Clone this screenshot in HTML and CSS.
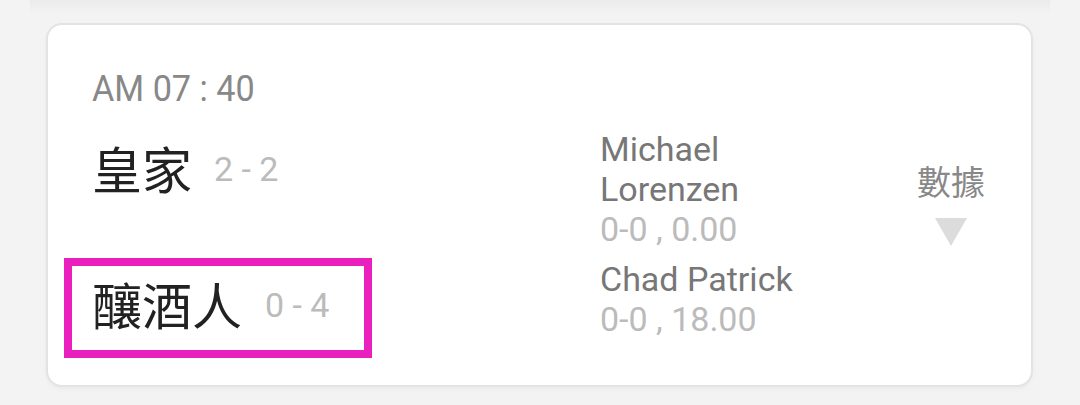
FILE: index.html
```html
<!DOCTYPE html>
<html lang="zh-Hant">

<head>
    <meta charset="UTF-8">
    <meta name="viewport" content="width=device-width, initial-scale=1.0">
    <title>賽程</title>
    <link rel="stylesheet" href="styles.css">
</head>

<body>
    <div class="prev-card"></div>

    <div class="game-card">
        <div class="game-time"><span>AM 07 : 40</span></div>

        <div class="game-body">
            <div class="teams">
                <div class="team">
                    <span class="team-name">皇家</span>
                    <span class="team-record">2 - 2</span>
                </div>
                <div class="team marked">
                    <span class="team-name">釀酒人</span>
                    <span class="team-record">0 - 4</span>
                </div>
            </div>

            <div class="pitchers">
                <div class="pitcher">
                    <div class="pitcher-name">Michael Lorenzen</div>
                    <div class="pitcher-stats">0-0 , 0.00</div>
                </div>
                <div class="pitcher">
                    <div class="pitcher-name">Chad Patrick</div>
                    <div class="pitcher-stats">0-0 , 18.00</div>
                </div>
            </div>

            <div class="stats-toggle">
                <span class="label">數據</span>
                <span class="arrow"></span>
            </div>
        </div>
    </div>
</body>

</html>
```

FILE: styles.css
```css
* {
    margin: 0;
    padding: 0;
    box-sizing: border-box;
}

body {
    font-family: Roboto, "Noto Sans CJK TC", sans-serif;
    background-color: #f3f3f3;
    width: 1080px;
    height: 405px;
    overflow: hidden;
}

.prev-card {
    height: 14px;
    margin: 0 30px;
    background: linear-gradient(#ebebeb, #f3f3f3);
}

.game-card {
    margin: 9px 47px 0 46px;
    height: 364px;
    background-color: #fff;
    border: 2px solid #e3e3e3;
    border-radius: 16px;
    box-shadow: 0 2px 4px rgba(0, 0, 0, 0.04);
    padding: 43px 45px 0 44px;
}

.game-time {
    height: 42px;
    line-height: 42px;
}

.game-time span {
    display: inline-block;
    font-size: 36px;
    color: #888;
    transform: scaleX(0.95);
    transform-origin: left center;
}

.game-body {
    display: flex;
    margin-top: 20px;
}

.teams {
    width: 508px;
    display: flex;
    flex-direction: column;
    gap: 52px;
}

.team {
    display: flex;
    align-items: center;
    height: 84px;
}

.team-name {
    font-family: "Noto Sans CJK TC", sans-serif;
    font-size: 50px;
    color: #222;
    margin-bottom: 10px;
}

.team-record {
    font-size: 34px;
    color: #bbb;
    margin-left: 22px;
    margin-bottom: 6px;
}

.team.marked {
    width: 292px;
    margin-left: -20px;
    padding-left: 20px;
    outline: 8px solid #e91fbe;
}

.team.marked .team-record {
    margin-left: 23px;
}

.pitchers {
    width: 230px;
    display: flex;
    flex-direction: column;
    gap: 10px;
    margin-top: -1px;
}

.pitcher {
    font-size: 34px;
    line-height: 40px;
}

.pitcher-name {
    color: #777;
}

.pitcher-stats {
    color: #bbb;
}

.stats-toggle {
    margin-left: auto;
    width: 70px;
    display: flex;
    flex-direction: column;
    align-items: center;
    margin-top: 31px;
}

.stats-toggle .label {
    font-family: "Noto Sans CJK TC", sans-serif;
    font-size: 34px;
    line-height: 40px;
    color: #888;
}

.stats-toggle .arrow {
    width: 0;
    height: 0;
    margin-top: 17px;
    border-left: 16px solid transparent;
    border-right: 16px solid transparent;
    border-top: 28px solid #dcdcdc;
}
```
